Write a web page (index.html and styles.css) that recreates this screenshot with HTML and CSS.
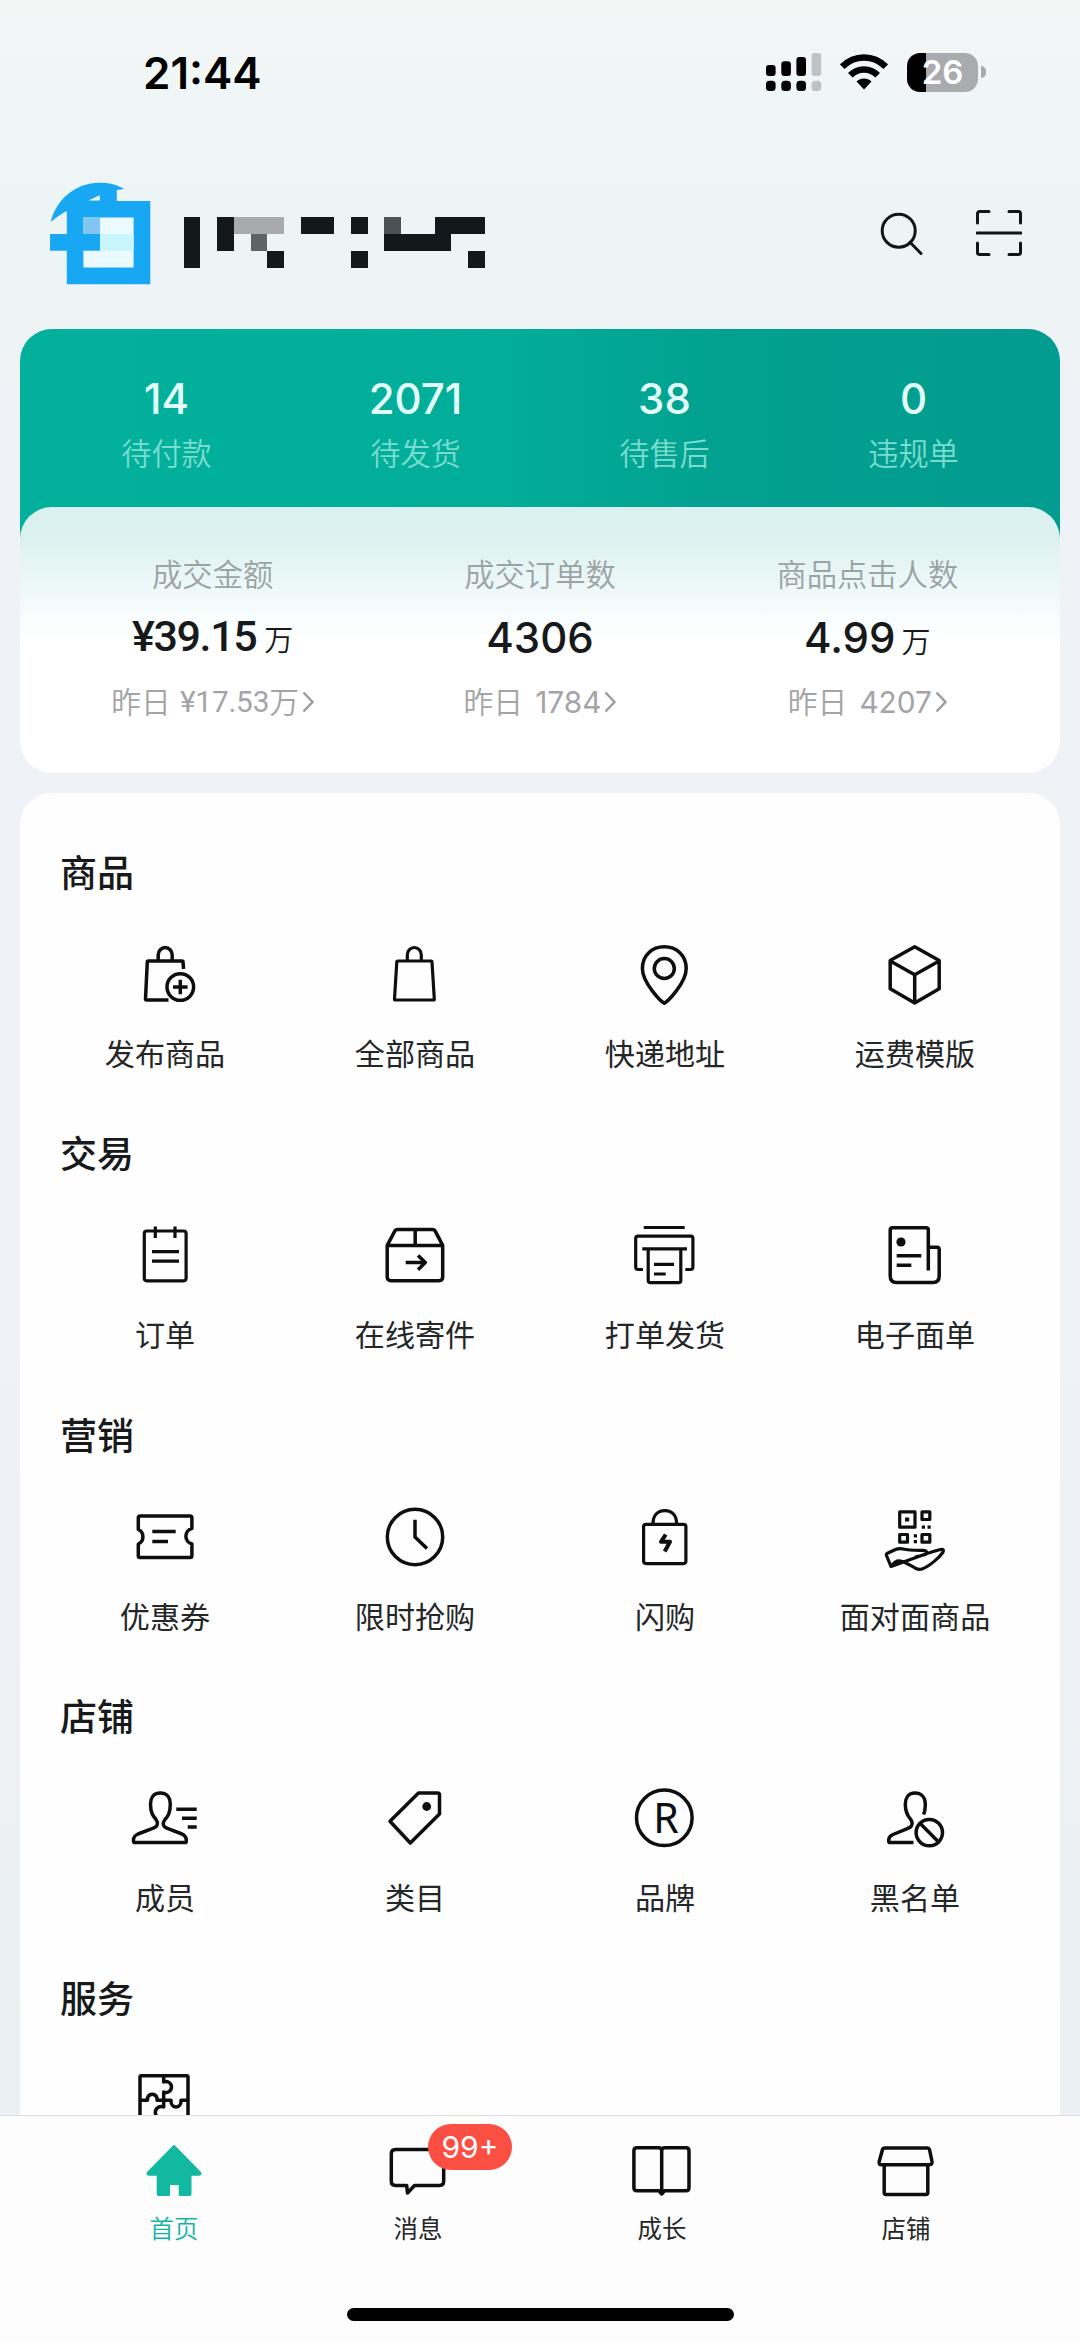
FILE: index.html
```html
<!DOCTYPE html>
<html lang="zh-CN">
<head>
<meta charset="utf-8">
<title>店铺首页</title>
<link rel="stylesheet" href="styles.css">
</head>
<body>
<div class="phone">
  <div class="status-bar">
    <span class="clock">21:44</span>
    <div class="indicators">
      <svg class="signal" width="56" height="40" viewBox="0 0 56 40">
        <rect x="0" y="13" width="9.6" height="11" rx="3"/><rect x="15.3" y="9.3" width="9.6" height="14.7" rx="3"/><rect x="30.4" y="5" width="9.6" height="19" rx="3"/>
        <rect x="0" y="28.7" width="9.6" height="10.3" rx="3.5"/><rect x="15.3" y="28.7" width="9.6" height="10.3" rx="3.5"/><rect x="30.4" y="28.7" width="9.6" height="10.3" rx="3.5"/>
        <g class="dim"><rect x="45.6" y="1" width="9.6" height="23" rx="3"/><rect x="45.6" y="28.7" width="9.6" height="10.3" rx="3.5"/></g>
      </svg>
      <svg class="wifi" width="48" height="36" viewBox="0 0 48 36">
        <g fill="none" stroke="#000" stroke-width="6.500"><path d="M2.200 12.700C14.500 .3 33.500 .3 45.800 12.700"/><path d="M10.300 21.200C18 13.500 30 13.500 37.700 21.200"/></g>
        <path d="M24 35.500 16.500 27.600C20.500 23.600 27.500 23.600 31.500 27.600Z"/>
      </svg>
      <div class="battery"><span class="battery-body">26</span><span class="battery-tip"></span></div>
    </div>
  </div>

  <header class="shop-header">
    <svg class="shop-logo" width="436" height="103" viewBox="50.200 182 436 103">
      <path fill="#18a8f3" d="M51 222C56 200 75 182.700 100 182.700 109 182.700 117 184.500 124.500 189L117 190V201H150.500V284.300H67V250.800H50.200V234H67V211Q60 214.500 51 222Z"/>
      <path fill="#eafaff" d="M83.600 217.400H133.800V267.500H83.600V250.800H100.300V234H83.600ZM88.500 200.600 100 195.200V200.600Z"/>
      <path fill="#82c6f0" d="M83.600 217.400H100.300V234H83.600Z"/>
      <path fill="#c9f5fd" d="M100.300 234H133.800V250.800H100.300Z"/>
      <g fill="#12181b" transform="scale(16.720)" shape-rendering="crispEdges">
        <path d="M11 13h1v3h-1zM13 13h1v2h-1zM16 15h1v1h-1zM18 13h2v1h-2zM21 13h1v1h-1zM21 15h1v1h-1zM23 14h3v-1h3v1h-2v1h-4zM28 15h1v1h-1z"/>
        <path fill="#a9aaad" d="M14 13h3v1h-3z"/><path fill="#5d6366" d="M15 14h1v1h-1z"/><path fill="#4a5255" d="M23 13h1v1h-1z"/>
      </g>
    </svg>
    <div class="header-actions">
      <svg class="line" width="46" height="46" viewBox="0 0 46 46"><circle cx="21.700" cy="20.700" r="16.500"/><path d="M33 32.300 44 43.500"/></svg>
      <svg class="line" width="46" height="46" viewBox="0 0 46 46"><path d="M1.500 13V3.500a2 2 0 0 1 2-2H13M33 1.500h9.500a2 2 0 0 1 2 2V13M44.500 33v9.500a2 2 0 0 1-2 2H33M13 44.500H3.500a2 2 0 0 1-2-2V33M1 23H45"/></svg>
    </div>
  </header>

  <main class="content">
    <section class="summary">
      <div class="orders">
        <div class="order"><b>14</b><span>待付款</span></div>
        <div class="order"><b>2071</b><span>待发货</span></div>
        <div class="order"><b>38</b><span>待售后</span></div>
        <div class="order"><b>0</b><span>违规单</span></div>
      </div>
      <div class="stats">
        <div class="stat">
          <span class="stat-name">成交金额</span>
          <span class="stat-value money"><b>¥39.15</b><i>万</i></span>
          <span class="stat-prev money-prev">昨日<em>¥17.53</em>万<svg width="12" height="22" viewBox="0 0 12 22"><path d="M1.500 1.500 10.500 11 1.500 20.500"/></svg></span>
        </div>
        <div class="stat">
          <span class="stat-name">成交订单数</span>
          <span class="stat-value"><b>4306</b></span>
          <span class="stat-prev">昨日<em>1784</em><svg width="12" height="22" viewBox="0 0 12 22"><path d="M1.500 1.500 10.500 11 1.500 20.500"/></svg></span>
        </div>
        <div class="stat">
          <span class="stat-name">商品点击人数</span>
          <span class="stat-value"><b>4.99</b><i>万</i></span>
          <span class="stat-prev">昨日<em>4207</em><svg width="12" height="22" viewBox="0 0 12 22"><path d="M1.500 1.500 10.500 11 1.500 20.500"/></svg></span>
        </div>
      </div>
    </section>

    <section class="tools">
      <div class="group">
        <h2>商品</h2>
        <div class="grid">
          <a class="tool"><svg viewBox="0 0 60 60"><path d="M23.200 17V11a7 7.500 0 0 1 14 0V17M33.500 56H11.500a1 1 0 0 1-1-1L12.300 18a1 1 0 0 1 1-1H47a1 1 0 0 1 1 1L48.600 25"/><circle cx="45.300" cy="43" r="13.300"/><path d="M38 43H52.600M45.300 35.700V50.300"/></svg>发布商品</a>
          <a class="tool"><svg class="thin" viewBox="0 0 60 60"><path d="M22.300 17V11a7 7.500 0 0 1 14 0V17M12.800 17H46a1 1 0 0 1 1 1L49.300 55a1 1 0 0 1-1 1H10.500a1 1 0 0 1-1-1L11.800 18a1 1 0 0 1 1-1Z"/></svg>全部商品</a>
          <a class="tool"><svg viewBox="0 0 60 60"><circle cx="29.300" cy="24.500" r="10"/><path d="M29.300 59.300C26 57.500 7.400 39 7.400 24.500 7.400 11.500 17 2.800 29.300 2.800S51.200 11.500 51.200 24.500C51.200 39 32.600 57.500 29.300 59.300Z"/></svg>快递地址</a>
          <a class="tool"><svg viewBox="0 0 60 60"><path d="M29.700 2.800 54.200 16.500V44.800L29.700 59 5.200 44.800V16.500ZM5.200 17 29.700 30.700 54.200 17M29.700 30.700V59"/></svg>运费模版</a>
        </div>
      </div>
      <div class="group">
        <h2>交易</h2>
        <div class="grid">
          <a class="tool"><svg class="thin" viewBox="0 0 60 60"><rect x="9.300" y="6" width="41.800" height="49.800" rx="2.500"/><path d="M20.300 1.400V13M40 1.400V13M17 26.600H44M17 36.200H44"/></svg>订单</a>
          <a class="tool"><svg viewBox="0 0 60 60"><path d="M2.200 20.400 9.500 6.600Q10.500 4.500 12.500 4.500H47.500Q49.500 4.500 50.500 6.600L57.700 20.400V52Q57.700 55.700 54 55.700H6Q2.200 55.700 2.200 52ZM2.200 20.400H57.700M30.200 4.500V20.400M20.700 37.600H40M33 30.500 40.300 37.600 33 44.700"/></svg>在线寄件</a>
          <a class="tool"><svg class="thin" viewBox="0 0 60 60"><path d="M8.700 2.500H49.700M8 44.500H3Q.7 44.500.7 42V13.500Q.7 11.100 3 11.100H55.500Q57.900 11.100 57.900 13.500V42Q57.900 44.500 55.500 44.500H50.300M7.300 23.800H52M13.200 23.800V55.500Q13.200 57.700 15.500 57.700H43.500Q45.800 57.700 45.800 55.500V23.800M19 39.300H39M19 49H30.700"/></svg>打单发货</a>
          <a class="tool"><svg viewBox="0 0 60 60"><path d="M43.300 45.500V5Q43.300 2.800 41 2.800H7.500Q5.200 2.800 5.200 5V51Q5.200 57.500 11.500 57.500H48Q54.200 57.500 54.200 51V24.500Q54.200 22.300 52 22.300H43.300M11.700 30.700H36.300M11.700 40.300H26.300"/><circle class="dot" cx="16" cy="17" r="4.600"/></svg>电子面单</a>
        </div>
      </div>
      <div class="group">
        <h2>营销</h2>
        <div class="grid">
          <a class="tool"><svg viewBox="0 0 60 60"><path d="M5 9H55Q56.900 9 56.900 11V21.500A8 8 0 0 0 56.900 37V48.500Q56.900 50.600 55 50.600H5Q3.300 50.600 3.300 48.500V37A8 8 0 0 0 3.300 22.500V11Q3.300 9 5 9ZM17.300 24.500H40.700M17.300 34.500H33"/></svg>优惠券</a>
          <a class="tool"><svg viewBox="0 0 60 60"><circle cx="30" cy="30" r="27.700"/><path d="M30 12.800V30L42 41.500"/></svg>限时抢购</a>
          <a class="tool"><svg class="thin" viewBox="0 0 60 60"><rect x="8.600" y="17.300" width="42.300" height="39.300" rx="2.500"/><path d="M18 17C18 8.500 22.500 3.700 29.800 3.700S41.600 8.500 41.600 17"/><path class="bold" d="M30.700 27.500 26 34.800H35L29.700 44.500"/></svg>闪购</a>
          <a class="tool"><svg class="thin" viewBox="0 0 60 60"><path d="M14.700 4.900H30V20.200H14.700ZM37 4.900H44.800V12.500H37ZM14.700 27.500H22.500V35.200H14.700ZM37 27.500H44.800V35.200H37Z"/><path class="dot" d="M20 10.400h4.200v4.200H20zM36.800 18.500h3.200v3.200h-3.200zM42.500 18.500h3.200v3.200h-3.200zM28.800 27.200H32v3.200h-3.200zM28.800 33H32v3.200h-3.200z"/><path d="M6 59.500 1.500 48.500Q1 47 2.500 46.300L10.500 42.500Q14 41 18 42C24 43.500 31 43.300 38 43.300 42.500 43.300 42.500 47 39.500 47.800L30 50M42 46.500C48 45 52.500 42.800 56.500 42.300Q59.500 42 57.800 45.500C54 51 44 59.500 37 62Q34 63 30.500 61.300C23 57 18 53.500 13 53.800 10 54.200 8.500 56.500 6 59.500Z"/></svg>面对面商品</a>
        </div>
      </div>
      <div class="group">
        <h2>店铺</h2>
        <div class="grid">
          <a class="tool"><svg viewBox="0 0 60 60"><path d="M25.300 5C18 5 15.500 10.500 15.500 16 15.500 25 18 28 21 31.500 22.500 33.500 22.800 34.500 22.300 36 22 38.500 21 39 17 40.700L3 46Q-1.500 48 -1.500 52V53Q-1.500 54.600 0 54.600H50Q51.300 54.600 51.300 53V51.500Q51 48 47 46L33 40.700C29.500 39 28.600 38.500 28.300 36 28 34.500 28.500 33.500 30 31.500 33 28 35.300 25 35.300 16 35.300 10.500 32.500 5 25.300 5ZM41.300 21.200H61.700M47 30.200H61.700M52.700 39H61.700"/></svg>成员</a>
          <a class="tool"><svg viewBox="0 0 60 60"><path d="M33.500 5.100H52.500Q54.500 5.100 54.500 7V26L25.300 55 5 33.300Z"/><circle class="dot" cx="41.700" cy="18.500" r="4.400"/></svg>类目</a>
          <a class="tool"><svg viewBox="0 0 60 60"><circle cx="29.300" cy="29.800" r="27.800"/><text x="31" y="44.700" text-anchor="middle">R</text></svg>品牌</a>
          <a class="tool"><svg viewBox="0 0 60 60"><path d="M38.500 26.500Q40.300 23 40.300 16C40.300 9 36 5 30 5 23 5 20.300 10.500 20.300 16 20.300 24 22.500 27.500 25 30.500 27.300 33.500 27.500 34.500 27 36 26.500 38.500 26 38.700 23 40.300L8 46.500Q3.700 48.500 3.700 52V53Q3.700 54.600 5 54.600H28.500"/><circle cx="44.300" cy="44.600" r="13.200"/><path d="M35 35.300 53.600 53.900"/></svg>黑名单</a>
        </div>
      </div>
      <div class="group">
        <h2>服务</h2>
        <div class="grid">
          <a class="tool"><svg viewBox="0 0 60 60"><path d="M5 56V7Q5 5.800 6.300 5.800H51.800Q53 5.800 53 7V56ZM28.700 5.800V12A5.500 5.500 0 1 1 28.700 22V37A6 6 0 1 0 28.700 48V56M5 30.300H12.500V28A5 5.500 0 0 1 22 28V30.300H36V31.500A5 5.500 0 0 0 46 31.500V30.300H53"/></svg></a>
        </div>
      </div>
    </section>
  </main>

  <nav class="tabs">
    <a class="tab active"><svg viewBox="0 0 60 60"><path class="home" d="M30 5 56 31.500Q57.500 33.700 55 33.700H46.500V53Q46.500 54 45.500 54H35.700V43H25V54H14.700Q13.700 54 13.700 53V33.700H5Q2.500 33.700 4 31.500Z"/></svg>首页</a>
    <a class="tab"><svg viewBox="0 0 60 60"><path d="M7.500 8.500H51.500Q55.700 8.500 55.700 13V40Q55.700 44.500 51.500 44.500H26.500L19.500 52 18.700 44.500H7.500Q3.300 44.500 3.300 40V13Q3.300 8.500 7.500 8.500Z"/></svg>消息<span class="badge">99+</span></a>
    <a class="tab"><svg viewBox="0 0 60 60"><path d="M29.700 53V10Q29.700 6.800 26.500 6.800H5Q1.900 6.800 1.900 10V46.500Q1.900 49.800 5 49.800H27L29.700 53 32.400 49.800H54Q57 49.800 57 46.500V10Q57 6.800 54 6.800H33Q29.700 6.800 29.700 10"/></svg>成长</a>
    <a class="tab"><svg viewBox="0 0 60 60"><path d="M9 7H51.500Q53 7 53.500 8.500L56 20.500Q56.500 23.700 53.500 23.700H5.500Q2.500 23.700 3.200 20.500L6.500 8.500Q7 7 9 7ZM8.200 23.700V51.500Q8.200 53.500 10 53.500H50Q51.800 53.500 51.800 51.500V23.700"/></svg>店铺</a>
  </nav>
  <div class="home-area"><div class="home-indicator"></div></div>
</div>
</body>
</html>
```
FILE: styles.css
```css
* { box-sizing: border-box; }
body { margin: 0; }
.phone {
  width: 1080px;
  height: 2341px;
  display: flex;
  flex-direction: column;
  overflow: hidden;
  background: linear-gradient(180deg, #f4f6f6 0, #eff5f7 110px, #edf4f6 260px, #eff2f6 420px, #eff2f6 1300px, #e9eff2 2341px);
  color: #17191b;
  font-family: Inter, "Noto Sans CJK SC", sans-serif;
}

.status-bar {
  height: 144px;
  padding: 0 94px 0 143px;
  display: flex;
  align-items: center;
  justify-content: space-between;
}
.clock { padding-top: 2px; font-size: 44px; font-weight: 600; color: #000; }
.indicators { display: flex; align-items: center; }
.signal .dim { fill: #bfc3c5; }
.wifi { margin-left: 18px; }
.battery { display: flex; align-items: center; margin-left: 19px; }
.battery-body {
  width: 71px;
  height: 39px;
  border-radius: 13px;
  background: linear-gradient(90deg, #000 19px, #a8acae 19px);
  color: #fff;
  font-size: 33px;
  font-weight: 600;
  line-height: 39px;
  text-align: center;
}
.battery-tip { width: 5px; height: 12px; margin-left: 3px; border-radius: 0 5px 5px 0; background: #a8acae; }

.shop-header {
  height: 185px;
  padding: 38px 58px 0 50px;
  display: flex;
  justify-content: space-between;
  align-items: flex-start;
}
.header-actions { display: flex; gap: 53px; padding-top: 28px; }
.line { fill: none; stroke: #111517; stroke-width: 3; stroke-linecap: round; }

.content {
  flex: 1;
  min-height: 0;
  overflow: hidden;
  padding: 0 20px;
  display: flex;
  flex-direction: column;
  gap: 20px;
}
.summary {
  flex: none;
  height: 444px;
  border-radius: 32px;
  background: linear-gradient(90deg, #02b09c 0, #02ae9a 45%, #02a08f 68%, #029c90 100%);
  background-size: 100% 240px;
  background-repeat: no-repeat;
}
.orders {
  height: 178px;
  padding: 42px 22px 0;
  display: grid;
  grid-template-columns: repeat(4, 1fr);
}
.order { display: flex; flex-direction: column; align-items: center; color: #e2fffa; }
.order b { font-size: 42px; line-height: 56px; font-weight: 500; }
.order span { margin-top: 7px; font-size: 30.200px; line-height: 40px; font-weight: 350; color: #7adccf; }

.stats {
  height: 266px;
  padding: 46px 29px 0;
  border-radius: 32px;
  background: linear-gradient(180deg, #daf1ef 0, #def3f1 38px, #edf8f8 78px, #f9fdfd 112px, #fff 140px);
  display: grid;
  grid-template-columns: repeat(3, 1fr);
}
.stat { display: flex; flex-direction: column; align-items: center; }
.stat-name { font-size: 30.300px; line-height: 44px; font-weight: 350; color: #9ba3a4; }
.stat-value { height: 56px; margin-top: 13px; display: flex; align-items: baseline; line-height: 56px; }
.stat-value b { font-size: 42px; font-weight: 500; }
.stat-value i { margin-left: 6px; font-size: 29px; font-style: normal; font-weight: 350; }
.money { position: relative; top: -2px; }
.money b { font-family: Roboto, sans-serif; font-size: 43px; letter-spacing: -1.400px; }
.money i { margin-left: 8px; }
.stat-prev {
  margin-top: 14px;
  display: flex;
  align-items: center;
  white-space: pre;
  font-size: 29.800px;
  line-height: 44px;
  font-weight: 350;
  color: #a3a4a7;
}
.stat-prev em { margin-left: 12px; font-style: normal; font-weight: 400; }
.money-prev em { margin-left: 9px; font-family: Roboto, sans-serif; letter-spacing: -.2px; }
.stat-prev svg { margin-left: 3px; fill: none; stroke: #9c9da0; stroke-width: 2.500; }

.tools {
  flex: none;
  padding: 56px 20px 0;
  border-radius: 32px 32px 0 0;
  background: #fefefe;
}
.group { height: 281.400px; }
.group h2 { margin: 0 0 45px; padding-left: 20px; font-size: 37px; line-height: 50px; font-weight: 500; }
.grid { display: grid; grid-template-columns: repeat(4, 1fr); }
.tool {
  display: flex;
  flex-direction: column;
  align-items: center;
  gap: 30px;
  font-size: 30.100px;
  line-height: 40px;
  font-weight: 400;
  color: #242628;
}
.tool svg, .tab svg {
  width: 60px;
  height: 60px;
  overflow: visible;
  fill: none;
  stroke: #0c0e0f;
  stroke-width: 3.500;
  stroke-linejoin: round;
}
.tool svg.thin { stroke-width: 3.200; }
.tool .dot { fill: #0c0e0f; stroke: none; }
.tool .bold { stroke-width: 4; }
.tool text { font-family: "Noto Sans", sans-serif; font-size: 41px; font-weight: 400; fill: #0c0e0f; stroke: none; }

.tabs {
  flex: none;
  height: 155px;
  padding: 25px 52px 0;
  border-top: 1px solid #dcdedf;
  background: #fdfdfe;
  display: grid;
  grid-template-columns: repeat(4, 1fr);
}
.tab {
  position: relative;
  display: flex;
  flex-direction: column;
  align-items: center;
  gap: 10px;
  font-size: 24.500px;
  line-height: 36px;
  font-weight: 400;
  color: #242628;
}
.tab.active { color: #14b59f; font-weight: 350; }
.tab .home { fill: #12b8a0; stroke: #12b8a0; stroke-width: 2; }
.badge {
  position: absolute;
  left: 132px;
  top: -17px;
  width: 84px;
  height: 46px;
  border-radius: 23px;
  background: #fb4f44;
  color: #fff;
  font-size: 30px;
  line-height: 47px;
  font-weight: 400;
  text-align: center;
}
.home-area { flex: none; height: 71px; padding-top: 38px; background: #fcfcfc; }
.home-indicator { width: 387px; height: 13px; margin: 0 auto; border-radius: 7px; background: #000; }
```
